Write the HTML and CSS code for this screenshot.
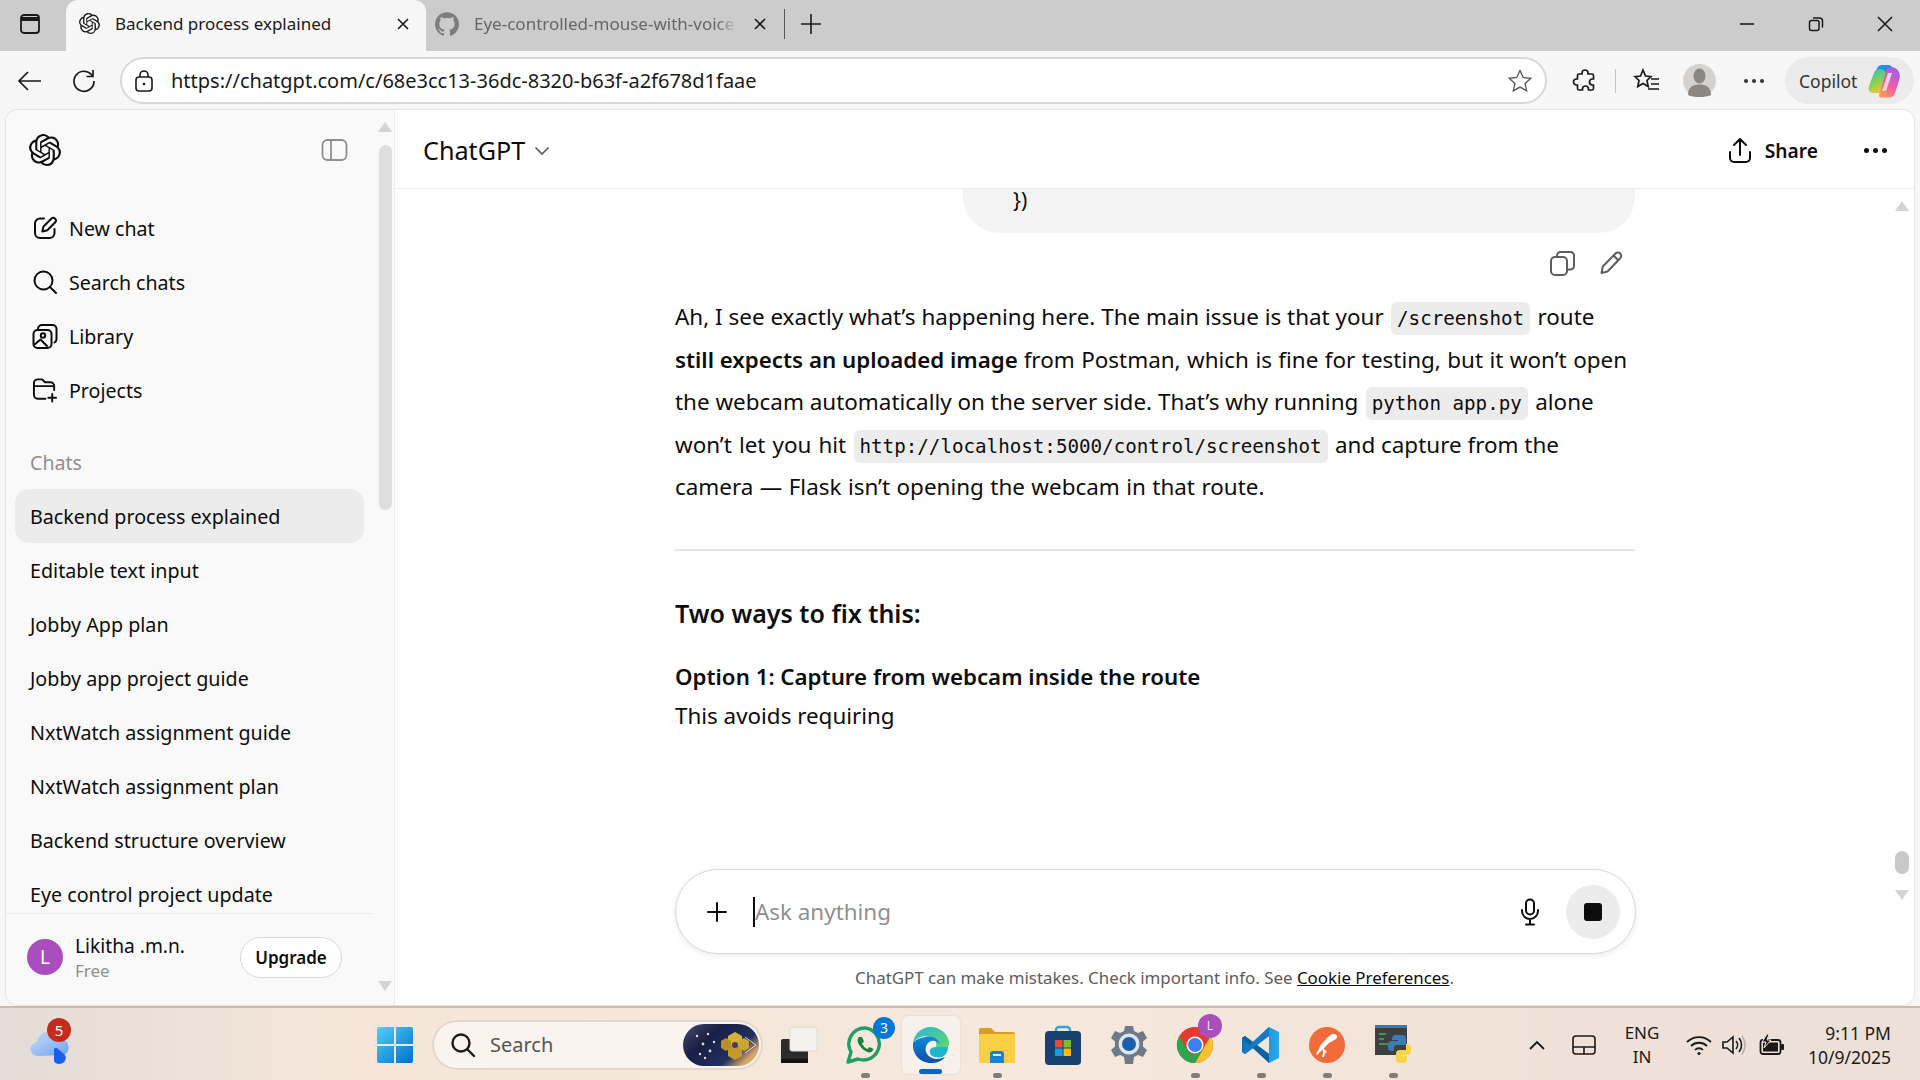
FILE: index.html
```html
<!DOCTYPE html>
<html lang="en">
<head>
<meta charset="utf-8">
<title>Backend process explained</title>
<link rel="stylesheet" href="styles.css">
</head>
<body>
<svg class="defs" width="0" height="0" aria-hidden="true">
  <defs>
    <symbol id="oai" viewBox="0 0 24 24"><path fill="currentColor" d="M22.2819 9.8211a5.9847 5.9847 0 0 0-.5157-4.9108 6.0462 6.0462 0 0 0-6.5098-2.9A6.0651 6.0651 0 0 0 4.9807 4.1818a5.9847 5.9847 0 0 0-3.9977 2.9 6.0462 6.0462 0 0 0 .7427 7.0966 5.98 5.98 0 0 0 .511 4.9107 6.051 6.051 0 0 0 6.5146 2.9001A5.9847 5.9847 0 0 0 13.2599 24a6.0557 6.0557 0 0 0 5.7718-4.2058 5.9894 5.9894 0 0 0 3.9977-2.9001 6.0557 6.0557 0 0 0-.7475-7.0729zm-9.022 12.6081a4.4755 4.4755 0 0 1-2.8764-1.0408l.1419-.0804 4.7783-2.7582a.7948.7948 0 0 0 .3927-.6813v-6.7369l2.02 1.1686a.071.071 0 0 1 .038.052v5.5826a4.504 4.504 0 0 1-4.4945 4.4944zm-9.6607-4.1254a4.4708 4.4708 0 0 1-.5346-3.0137l.142.0852 4.783 2.7582a.7712.7712 0 0 0 .7806 0l5.8428-3.3685v2.3324a.0804.0804 0 0 1-.0332.0615L9.74 19.9502a4.4992 4.4992 0 0 1-6.1408-1.6464zM2.3408 7.8956a4.485 4.485 0 0 1 2.3655-1.9728V11.6a.7664.7664 0 0 0 .3879.6765l5.8144 3.3543-2.0201 1.1685a.0757.0757 0 0 1-.071 0l-4.8303-2.7865A4.504 4.504 0 0 1 2.3408 7.872zm16.5963 3.8558L13.1038 8.364 15.1192 7.2a.0757.0757 0 0 1 .071 0l4.8303 2.7913a4.4944 4.4944 0 0 1-.6765 8.1042v-5.6772a.79.79 0 0 0-.407-.667zm2.0107-3.0231l-.142-.0852-4.7735-2.7818a.7759.7759 0 0 0-.7854 0L9.409 9.2297V6.8974a.0662.0662 0 0 1 .0284-.0615l4.8303-2.7866a4.4992 4.4992 0 0 1 6.6802 4.66zM8.3065 12.863l-2.02-1.1638a.0804.0804 0 0 1-.038-.0567V6.0742a4.4992 4.4992 0 0 1 7.3757-3.4537l-.142.0805L8.704 5.459a.7948.7948 0 0 0-.3927.6813zm1.0976-2.3654l2.602-1.4998 2.6069 1.4998v2.9994l-2.5974 1.4997-2.6067-1.4997Z"/></symbol>
    <linearGradient id="cpA" x1="0" y1="0" x2="1" y2="1"><stop offset="0" stop-color="#22a6ee"/><stop offset="1" stop-color="#3757e0"/></linearGradient>
    <linearGradient id="cpB" x1="0.3" y1="0" x2="0.7" y2="1"><stop offset="0" stop-color="#2fc9b0"/><stop offset="0.55" stop-color="#8fd14f"/><stop offset="1" stop-color="#fbc52c"/></linearGradient>
    <linearGradient id="cpC" x1="0.8" y1="0" x2="0.3" y2="1"><stop offset="0" stop-color="#9a5cf2"/><stop offset="0.6" stop-color="#ee5fa5"/><stop offset="1" stop-color="#f9965a"/></linearGradient>
    <linearGradient id="winG" x1="0" y1="0" x2="1" y2="1"><stop offset="0" stop-color="#4fd0fb"/><stop offset="1" stop-color="#0070c8"/></linearGradient>
    <linearGradient id="edgeA" x1="0" y1="0" x2="1" y2="1"><stop offset="0" stop-color="#2fb7d8"/><stop offset="1" stop-color="#5fd66a"/></linearGradient>
    <linearGradient id="edgeB" x1="0" y1="0" x2="0" y2="1"><stop offset="0" stop-color="#0c8ad8"/><stop offset="1" stop-color="#0c4fa8"/></linearGradient>
    <linearGradient id="cloudG" x1="0" y1="0" x2="1" y2="1"><stop offset="0" stop-color="#c7dcfa"/><stop offset="1" stop-color="#6fa3ef"/></linearGradient>
    <linearGradient id="spaceG" x1="0" y1="0" x2="1" y2="0.6"><stop offset="0" stop-color="#4a4a68"/><stop offset="0.4" stop-color="#161f45"/><stop offset="0.8" stop-color="#23305f"/><stop offset="1" stop-color="#d8a668"/></linearGradient>
    <linearGradient id="vsG" x1="0" y1="0" x2="1" y2="0"><stop offset="0" stop-color="#0f6fb8"/><stop offset="1" stop-color="#27a9f0"/></linearGradient>
  </defs>
</svg>

<header class="tabstrip">
  <span class="strip-btn">
    <svg width="22" height="22" viewBox="0 0 22 22" fill="none" stroke="#1a1a1a" stroke-width="1.8"><rect x="2" y="2" width="18" height="18" rx="3"/><path d="M2 6h18" stroke-width="4"/></svg>
  </span>
  <div class="tab tab-active">
    <svg class="tab-fav" width="21" height="21"><use href="#oai"/></svg>
    <span class="tab-title">Backend process explained</span>
    <svg class="tab-x" width="14" height="14" viewBox="0 0 14 14" stroke="#1a1a1a" stroke-width="1.6"><path d="M2 2l10 10M12 2L2 12"/></svg>
  </div>
  <div class="tab tab-other">
    <svg class="tab-fav" width="24" height="24" viewBox="0 0 24 24"><path fill="#7d7d7d" d="M12 .297c-6.63 0-12 5.373-12 12 0 5.303 3.438 9.8 8.205 11.385.6.113.82-.258.82-.577 0-.285-.01-1.04-.015-2.04-3.338.724-4.042-1.61-4.042-1.61C4.422 18.07 3.633 17.7 3.633 17.7c-1.087-.744.084-.729.084-.729 1.205.084 1.838 1.236 1.838 1.236 1.07 1.835 2.809 1.305 3.495.998.108-.776.417-1.305.76-1.605-2.665-.3-5.466-1.332-5.466-5.93 0-1.31.465-2.38 1.235-3.22-.135-.303-.54-1.523.105-3.176 0 0 1.005-.322 3.3 1.23.96-.267 1.98-.399 3-.405 1.02.006 2.04.138 3 .405 2.28-1.552 3.285-1.23 3.285-1.23.645 1.653.24 2.873.12 3.176.765.84 1.23 1.91 1.23 3.22 0 4.61-2.805 5.625-5.475 5.92.42.36.81 1.096.81 2.22 0 1.606-.015 2.896-.015 3.286 0 .315.21.69.825.57C20.565 22.092 24 17.592 24 12.297c0-6.627-5.373-12-12-12"/></svg>
    <span class="tab-title tab-title-dim">Eye-controlled-mouse-with-voice</span>
    <svg class="tab-x" width="14" height="14" viewBox="0 0 14 14" stroke="#1a1a1a" stroke-width="1.6"><path d="M2 2l10 10M12 2L2 12"/></svg>
  </div>
  <span class="tab-sep"></span>
  <svg class="tab-plus" width="22" height="22" viewBox="0 0 22 22" stroke="#1a1a1a" stroke-width="1.6"><path d="M11 1v20M1 11h20"/></svg>
  <div class="win-ctrls">
    <svg width="16" height="16" viewBox="0 0 16 16" stroke="#1a1a1a" stroke-width="1.6"><path d="M1 8h14"/></svg>
    <svg width="16" height="16" viewBox="0 0 16 16" fill="none" stroke="#1a1a1a" stroke-width="1.5"><rect x="1.5" y="4.5" width="9.5" height="10" rx="2"/><path d="M5 2h6.5a3 3 0 0 1 3 3v6.5"/></svg>
    <svg width="16" height="16" viewBox="0 0 16 16" stroke="#1a1a1a" stroke-width="1.6"><path d="M1 1l14 14M15 1L1 15"/></svg>
  </div>
</header>

<nav class="toolbar">
  <svg class="tb-back" width="26" height="24" viewBox="0 0 26 24" fill="none" stroke="#1a1a1a" stroke-width="1.7"><path d="M24 12H2M11 3l-9 9 9 9"/></svg>
  <svg class="tb-reload" width="26" height="26" viewBox="0 0 26 26" fill="none" stroke="#1a1a1a" stroke-width="1.7"><path d="M21.5 8A10 10 0 1 0 23 13"/><path d="M22 2v6.5h-6.5"/></svg>
  <div class="address">
    <svg width="20" height="24" viewBox="0 0 20 24" fill="none" stroke="#1a1a1a" stroke-width="1.6"><rect x="2" y="8" width="16" height="14" rx="3"/><path d="M6 8V6a4 4 0 0 1 8 0v2"/><circle cx="10" cy="15" r="1.3" fill="#1a1a1a" stroke="none"/></svg>
    <span class="url">https://chatgpt.com/c/68e3cc13-36dc-8320-b63f-a2f678d1faae</span>
    <svg class="addr-star" width="26" height="26" viewBox="0 0 26 26" fill="none" stroke="#555" stroke-width="1.3"><path d="M13 2.5l3.2 7 7.6.8-5.7 5.1 1.6 7.5L13 19.1l-6.7 3.8 1.6-7.5-5.7-5.1 7.6-.8z"/></svg>
  </div>
  <svg class="tb-ext" width="26" height="26" viewBox="0 0 26 26" fill="none" stroke="#1a1a1a" stroke-width="1.7"><path d="M10 5a3 3 0 0 1 6 0v1h4a1.5 1.5 0 0 1 1.5 1.5V11h-1a3 3 0 0 0 0 6h1v3.5A1.5 1.5 0 0 1 20 22h-3.5v-1a3 3 0 0 0-6 0v1H7a1.5 1.5 0 0 1-1.5-1.5V17h-1a3 3 0 0 1 0-6h1V7.5A1.5 1.5 0 0 1 7 6h3z"/></svg>
  <span class="tb-sep"></span>
  <svg class="tb-fav" width="28" height="26" viewBox="0 0 28 26" fill="none" stroke="#1a1a1a" stroke-width="1.7"><path d="M10 2l2.5 6 5.5.6-4 3.9 1.2 6-5.2-3-5.2 3 1.2-6-4-3.9 5.5-.6z"/><path d="M18 11h8M18 16h8M15 21h11"/></svg>
  <span class="profile"><svg width="33" height="33" viewBox="0 0 33 33"><circle cx="16.5" cy="16.5" r="16.5" fill="#d5d3cf"/><ellipse cx="16.5" cy="12" rx="6" ry="7.5" fill="#8b8782"/><path d="M5 31c0-8 5-10.5 11.5-10.5S28 23 28 31c-3 1.5-7 2-11.5 2S8 32.5 5 31z" fill="#8b8782"/></svg></span>
  <span class="tb-dots"><i></i><i></i><i></i></span>
  <div class="copilot">
    <span>Copilot</span>
    <svg width="34" height="34" viewBox="0 0 34 34"><path d="M21 1h-6c-3 0-4.5 1.5-5.5 4.5L4 22l11 2 6-18c.5-2 2-3 4-3-1-1.5-2.5-2-4-2z" fill="url(#cpA)"/><path d="M13 5c-3 0-5 1-6 4L2 22c-1.5 4 1 7 4.5 7H15c1 0 1.5-1 2-2l3-12C20 8 17 5 13 5z" fill="url(#cpB)"/><path d="M24 3c-3 0-4 2-5 4l-7 24c-.3 1.5.5 2.5 2 2.5h8c3 0 5-1.5 6-4.5l4.5-14C34 9 30 3 24 3z" fill="url(#cpC)"/><path d="M21 9h4l-6 18h-4z" fill="#fff" opacity=".7"/></svg>
  </div>
</nav>

<div class="window">
  <aside class="sidebar">
    <div class="side-scroll">
      <div class="side-top">
        <svg class="side-logo" width="32" height="32"><use href="#oai"/></svg>
        <svg width="27" height="24" viewBox="0 0 27 24" fill="none" stroke="#8e8e8e" stroke-width="1.8"><rect x="1.5" y="2" width="24" height="20" rx="5"/><path d="M10 2v20"/></svg>
      </div>
      <ul class="side-nav">
        <li><svg width="26" height="26" viewBox="0 0 26 26" fill="none" stroke="#0d0d0d" stroke-width="2" stroke-linecap="round" stroke-linejoin="round"><path d="M12 3.5H8a5 5 0 0 0-5 5V18a5 5 0 0 0 5 5h9.5a5 5 0 0 0 5-5v-4"/><path d="M19.5 3.5a2.7 2.7 0 0 1 3.8 3.8l-8 8-5 1.2 1.2-5z"/></svg>New chat</li>
        <li><svg width="26" height="26" viewBox="0 0 26 26" fill="none" stroke="#0d0d0d" stroke-width="2" stroke-linecap="round"><circle cx="11.5" cy="11.5" r="9"/><path d="M18.2 18.2L24 24"/></svg>Search chats</li>
        <li><svg width="26" height="26" viewBox="0 0 26 26" fill="none" stroke="#0d0d0d" stroke-width="2" stroke-linecap="round" stroke-linejoin="round"><rect x="1.5" y="7" width="18" height="18" rx="4"/><path d="M6 7V6a4 4 0 0 1 4-4h10.5a4 4 0 0 1 4 4v10a4 4 0 0 1-2 3.5"/><circle cx="11" cy="12.5" r="2.2"/><path d="M2 22l6.5-5.5L15 23"/></svg>Library</li>
        <li><svg width="26" height="26" viewBox="0 0 27 26" fill="none" stroke="#0d0d0d" stroke-width="2" stroke-linecap="round" stroke-linejoin="round"><path d="M14 22H6a4 4 0 0 1-4-4V6a4 4 0 0 1 4-4h4.5l3 3H19a4 4 0 0 1 4 4v4M2 9h21"/><path d="M21 17v8M17 21h8"/></svg>Projects</li>
      </ul>
      <div class="side-label">Chats</div>
      <ul class="chat-list">
        <li class="chat-active">Backend process explained</li>
        <li>Editable text input</li>
        <li>Jobby App plan</li>
        <li>Jobby app project guide</li>
        <li>NxtWatch assignment guide</li>
        <li>NxtWatch assignment plan</li>
        <li>Backend structure overview</li>
        <li>Eye control project update</li>
      </ul>
      <div class="side-user">
        <span class="avatar">L</span>
        <div class="user-text"><div class="user-name">Likitha .m.n.</div><div class="user-plan">Free</div></div>
        <span class="upgrade">Upgrade</span>
      </div>
    </div>
    <div class="scrollbar side-bar">
      <span class="sb-up"></span>
      <span class="side-thumb"></span>
      <span class="sb-down"></span>
    </div>
  </aside>

  <main class="main">
    <div class="main-head">
      <span class="model">ChatGPT</span>
      <svg class="model-caret" width="16" height="10" viewBox="0 0 16 10" fill="none" stroke="#5d5d5d" stroke-width="1.7"><path d="M1.5 1.5L8 8l6.5-6.5"/></svg>
      <span class="head-gap"></span>
      <svg width="24" height="27" viewBox="0 0 24 27" fill="none" stroke="#0d0d0d" stroke-width="2" stroke-linecap="round" stroke-linejoin="round"><path d="M12 18V2M6 8l6-6 6 6M2 15v6a4 4 0 0 0 4 4h12a4 4 0 0 0 4-4v-6"/></svg>
      <span class="share">Share</span>
      <span class="head-dots"><i></i><i></i><i></i></span>
    </div>
    <div class="main-body">
      <div class="thread">
        <div class="column">
          <div class="bubble"><span class="bubble-code">})</span></div>
          <div class="msg-actions">
            <svg width="27" height="27" viewBox="0 0 27 27" fill="none" stroke="#5d5d5d" stroke-width="2" stroke-linejoin="round"><rect x="2" y="7" width="16" height="18" rx="4"/><path d="M8 7V5.5A3.5 3.5 0 0 1 11.5 2h10A3.5 3.5 0 0 1 25 5.5V16a3.5 3.5 0 0 1-3.5 3.5H18"/></svg>
            <svg width="26" height="26" viewBox="0 0 26 26" fill="none" stroke="#5d5d5d" stroke-width="2" stroke-linejoin="round"><path d="M3.5 23l1.3-6.5L17.5 3.5a2.9 2.9 0 0 1 4.7 4.7L9.5 21.5z"/><path d="M15.5 5.500l4.800 4.800"/></svg>
          </div>
          <p class="para">Ah, I see exactly what’s happening here. The main issue is that your <code>/screenshot</code> route<br><strong>still expects an uploaded image</strong> <span class="para-wide">from Postman, which is fine for testing, but it won’t open</span><br>the webcam automatically on the server side. That’s why running <code>python app.py</code> alone<br><span class="para-wider">won’t let you hit</span> <code>http://localhost:5000/control/screenshot</code> and capture from the<br><span class="para-wide">camera — Flask isn’t opening the webcam in that route.</span></p>
          <hr class="rule">
          <h3 class="h-ways">Two ways to fix this:</h3>
          <p class="opt"><strong>Option 1: Capture from webcam inside the route</strong><br>This avoids requiring</p>
        </div>
      </div>
      <div class="scrollbar main-bar">
        <span class="sb-up"></span>
        <span class="main-thumb"></span>
        <span class="sb-down"></span>
      </div>
    </div>
    <div class="composer-wrap">
      <div class="composer">
        <svg class="comp-plus" width="22" height="22" viewBox="0 0 22 22" stroke="#0d0d0d" stroke-width="2" stroke-linecap="round"><path d="M11 2v18M2 11h18"/></svg>
        <span class="caret"></span>
        <span class="placeholder">Ask anything</span>
        <svg class="comp-mic" width="20" height="28" viewBox="0 0 20 28" fill="none" stroke="#0d0d0d" stroke-width="2" stroke-linecap="round"><rect x="6" y="1.5" width="8" height="15" rx="4"/><path d="M2 12v1a8 8 0 0 0 16 0v-1M10 21v5M6 26.5h8"/></svg>
        <span class="stop"><i></i></span>
      </div>
    </div>
    <div class="disclaimer">ChatGPT can make mistakes. Check important info. See <u>Cookie Preferences</u>.</div>
  </main>
</div>

<footer class="taskbar">
  <div class="widget">
    <svg width="40" height="42" viewBox="0 0 40 42"><path d="M9 32a7 7 0 0 1-1-14 12 12 0 0 1 23-3 8.5 8.5 0 0 1 4 16z" fill="url(#cloudG)"/><path d="M25 26c0-2 2-2.5 3.5-1.5l7 6c2 2 1.5 5 0 7s-5 3-8 2c-2-1-2.5-2-2.5-4z" fill="#1a5ef0"/></svg>
    <span class="widget-badge">5</span>
  </div>
  <div class="tb-icon tb-win">
    <svg width="36" height="36" viewBox="0 0 36 36"><path d="M2 0h15v17H0V2a2 2 0 0 1 2-2zM19 0h15a2 2 0 0 1 2 2v15H19zM0 19h17v17H2a2 2 0 0 1-2-2zM19 19h17v15a2 2 0 0 1-2 2H19z" fill="url(#winG)"/></svg>
  </div>
  <div class="search-box">
    <svg width="26" height="26" viewBox="0 0 26 26" fill="none" stroke="#1a1a1a" stroke-width="2.4" stroke-linecap="round"><circle cx="11" cy="11" r="8.5"/><path d="M17.5 17.5L24 24"/></svg>
    <span class="search-label">Search</span>
    <svg class="search-art" width="76" height="42" viewBox="0 0 76 42"><rect width="76" height="42" rx="21" fill="url(#spaceG)"/><g fill="#e6dcc0"><circle cx="14" cy="12" r="1.2"/><circle cx="20" cy="20" r="1.4"/><circle cx="25" cy="10" r="1.2"/><circle cx="27" cy="27" r="1.4"/><circle cx="17" cy="30" r="1.2"/><circle cx="31" cy="18" r="1.2"/><circle cx="22" cy="34" r="1.2"/></g><g fill="#d9b13a"><path d="M52 8l7 4v8l-7 4-7-4v-8z"/><path d="M52 20l7 4v8l-7 4-7-4v-8z" fill="#c49a2e"/><path d="M61 14l5 3v7l-5 3-5-3v-7z" fill="#c9a535"/><path d="M43 14l5 3v7l-5 3-5-3v-7z" fill="#b98f2b"/></g><circle cx="52" cy="21" r="3" fill="#4a3a66"/><path d="M62 13l11 8-11 8" fill="none" stroke="#cfd3e6" stroke-width="1"/></svg>
  </div>
  <div class="tb-icon">
    <svg width="38" height="38" viewBox="0 0 38 38"><rect x="1" y="13" width="27" height="24" rx="2" fill="#2b2b2b"/><rect x="1" y="33" width="27" height="4" fill="#111"/><rect x="10" y="1" width="27" height="24" rx="2" fill="#f4f1ee" stroke="#e0dbd6"/></svg>
  </div>
  <div class="tb-icon tb-run">
    <svg width="38" height="40" viewBox="0 0 38 40"><path d="M19 3a16 16 0 0 0-14 24L2 37l10-3a16 16 0 1 0 7-31z" fill="none" stroke="#1f9f62" stroke-width="3.4" stroke-linejoin="round"/><path d="M13 12c-2 2-2 5 1 9s6 6 9 6.5c2 .2 4-1.5 4.5-3.5l-4-2-2 2c-2-.7-4.5-3-5.5-5.5l2-2-2-4.5z" fill="#14833f"/></svg>
    <span class="app-badge">3</span>
    <i class="dot"></i>
  </div>
  <div class="tb-icon tb-active">
    <svg width="38" height="38" viewBox="0 0 38 38"><path d="M19 1C9 1 2 8 1 17c4-6 11-8 17-6 6 2 7 7 6 10h12c1-2 1-4 1-5C36 8 28 1 19 1z" fill="url(#edgeA)"/><path d="M1 17C0 28 8 37 19 37c6 0 11-2 14-6-6 3-14 3-18-3-3-5-1-11 4-13 3-1 7 0 9 3-2-6-9-9-15-7C8 12 3 14 1 17z" fill="url(#edgeB)"/><path d="M36 21H24c-3 0-5 1-6 3-1 3 1 6 5 7 4 1 8 0 10-2 2-2 3-5 3-8z" fill="#1fb6c9"/></svg>
    <i class="active-bar"></i>
  </div>
  <div class="tb-icon tb-run">
    <svg width="38" height="36" viewBox="0 0 38 36"><path d="M1 3a2 2 0 0 1 2-2h10l4 4h18a2 2 0 0 1 2 2v5H1z" fill="#d99e1f"/><rect x="1" y="7" width="36" height="29" rx="1" fill="#fbcf44"/><path d="M12 36v-9a3 3 0 0 1 3-3h8a3 3 0 0 1 3 3v9z" fill="#1383d6"/><rect x="15" y="27" width="8" height="2" fill="#d6ecfb"/></svg>
    <i class="dot"></i>
  </div>
  <div class="tb-icon">
    <svg width="36" height="40" viewBox="0 0 36 40"><path d="M11 7V5a3 3 0 0 1 3-3h8a3 3 0 0 1 3 3v2" fill="none" stroke="#2fa3dc" stroke-width="2.4"/><rect x="0" y="6" width="36" height="34" rx="4" fill="#17406f"/><rect x="10" y="15" width="7.5" height="7.5" fill="#ea4c2c"/><rect x="18.5" y="15" width="7.5" height="7.5" fill="#7dbb2b"/><rect x="10" y="23.5" width="7.5" height="7.5" fill="#1a9ce0"/><rect x="18.5" y="23.5" width="7.5" height="7.5" fill="#fdb813"/></svg>
  </div>
  <div class="tb-icon">
    <svg width="38" height="40" viewBox="0 0 38 40"><path d="M15 1h8l1 5 4 2 5-2 4 7-4 3.5v5L37 25l-4 7-5-2-4 2-1 7h-8l-1-7-4-2-5 2-4-7 4-3.5v-5L1 13l4-7 5 2 4-2z" fill="#6e7a87"/><circle cx="19" cy="19" r="10.5" fill="#dfe6ef"/><circle cx="19" cy="19" r="7" fill="#1c5fa8"/></svg>
  </div>
  <div class="tb-icon tb-run">
    <svg width="38" height="38" viewBox="0 0 38 38"><circle cx="19" cy="19" r="18" fill="#e33b2e"/><path d="M34.6 10A18 18 0 0 1 19 37l7.8-13.5z" fill="#fbc02d"/><path d="M3.4 10A18 18 0 0 0 19 37l7.8-13.5L19 28a9 9 0 0 1-7.8-4.5z" fill="#2fa44f"/><circle cx="19" cy="19" r="8.5" fill="#fff"/><circle cx="19" cy="19" r="7" fill="#3b7ff0"/></svg>
    <span class="chrome-badge">L</span>
    <i class="dot"></i>
  </div>
  <div class="tb-icon tb-run">
    <svg width="38" height="38" viewBox="0 0 38 38"><path d="M27 1l10 5v26l-10 5L11 22 3 28l-3-2v-14l3-2 8 6z" fill="url(#vsG)"/><path d="M27 10L15 19l12 9z" fill="#f1e6dc"/><path d="M0 12l3-2 24 18v9z" fill="#0d62a6"/><path d="M0 26l3 2L27 10V1z" fill="#1778c4"/></svg>
    <i class="dot"></i>
  </div>
  <div class="tb-icon tb-run">
    <svg width="36" height="36" viewBox="0 0 36 36"><circle cx="18" cy="18" r="18" fill="#f26b3a"/><path d="M25 7c3 0 4 3 2 5l-7 4-9 9-3 3-1-1 3-5 1-3 7-8c2-2 4-4 7-4z" fill="#fff"/><path d="M13 20l5 5-2 1-1 4h-2l1-5z" fill="#fff"/></svg>
    <i class="dot"></i>
  </div>
  <div class="tb-icon tb-run">
    <svg width="36" height="40" viewBox="0 0 36 40"><rect x="0" y="0" width="32" height="30" fill="#3c4043"/><rect x="0" y="0" width="32" height="3" fill="#2d7fc4"/><path d="M4 9h7M4 14h5M4 19h9" stroke="#4caf50" stroke-width="1.6"/><path d="M22 10h5a4 4 0 0 1 4 4v6h-9a3 3 0 0 0-3 3v3h-2a4 4 0 0 1-4-4v-2a4 4 0 0 1 4-4h6v-1h-6v-1a4 4 0 0 1 5-4z" fill="#3b7cb5"/><path d="M31 19h1a4 4 0 0 1 4 4v3a4 4 0 0 1-4 4h-6v1h6v3a4 4 0 0 1-4 4h-3a4 4 0 0 1-4-4v-5a4 4 0 0 1 4-4h6z" fill="#f7d54a"/></svg>
    <i class="dot"></i>
  </div>
  <div class="tray">
    <svg class="tr-chev" width="16" height="10" viewBox="0 0 16 10" fill="none" stroke="#1a1a1a" stroke-width="1.8"><path d="M1 9l7-7 7 7"/></svg>
    <svg class="tr-touch" width="24" height="20" viewBox="0 0 24 20" fill="none" stroke="#1a1a1a" stroke-width="1.6"><rect x="1" y="1" width="22" height="18" rx="3"/><path d="M1 12h22M12 12v7"/></svg>
    <div class="tr-lang">ENG<br>IN</div>
    <svg class="tr-wifi" width="26" height="22" viewBox="0 0 26 22" fill="none" stroke="#1a1a1a" stroke-width="1.8"><path d="M1 8a17 17 0 0 1 24 0M5 12a11.5 11.5 0 0 1 16 0M9 16a5.5 5.5 0 0 1 8 0"/><circle cx="13" cy="19.5" r="1.6" fill="#1a1a1a" stroke="none"/></svg>
    <svg class="tr-vol" width="24" height="22" viewBox="0 0 24 22" fill="none" stroke="#1a1a1a" stroke-width="1.6"><path d="M1 8v6h4l6 5V3L5 8z"/><path d="M14 7a6 6 0 0 1 0 8M17 4a11 11 0 0 1 0 14"/><path d="M20 2a15 15 0 0 1 0 18" stroke="#b5b0aa"/></svg>
    <svg class="tr-batt" width="26" height="24" viewBox="0 0 26 24"><rect x="1.5" y="7" width="20" height="14" rx="2.5" fill="none" stroke="#1a1a1a" stroke-width="1.8"/><rect x="4" y="9.5" width="15" height="9" fill="#1a1a1a"/><rect x="22" y="11" width="3" height="6" rx="1" fill="#1a1a1a"/><path d="M8 1L3 9h4l-2 6 7-8H8l2-6z" fill="#1a1a1a" stroke="#f3e4d8" stroke-width="1"/></svg>
    <div class="tr-clock"><div>9:11 PM</div><div>10/9/2025</div></div>
  </div>
</footer>
</body>
</html>
```

FILE: styles.css
```css
* { box-sizing: border-box; }
html, body { margin: 0; height: 100%; }
body {
  width: 1920px; height: 1080px; overflow: hidden;
  display: flex; flex-direction: column;
  font-family: "Noto Sans", "Open Sans", sans-serif;
  color: #0d0d0d; background: #f7f7f7;
}
.defs { position: absolute; }
ul { list-style: none; margin: 0; padding: 0; }

/* tab strip */
.tabstrip { height: 51px; flex: none; background: #cccccc; display: flex; align-items: center; padding-left: 19px; }
.strip-btn { width: 47px; display: flex; padding-bottom: 3px; }
.tab { height: 51px; display: flex; align-items: center; flex: none; }
.tab-active { width: 360px; background: #f7f7f7; border-radius: 12px 12px 0 0; padding: 0 16px 4px 13px; color: #1a1a1a; }
.tab-other { width: 346px; padding: 0 5px 4px 9px; }
.tab-fav { flex: none; color: #1a1a1a; }
.tab-title { flex: 1; margin-left: 15px; font-size: 17px; white-space: nowrap; overflow: hidden; }
.tab-title-dim { margin-left: 15px; color: #666; flex: none; width: 264px; margin-right: 15px; -webkit-mask-image: linear-gradient(90deg, #000 92%, transparent); mask-image: linear-gradient(90deg, #000 92%, transparent); }
.tab-sep { width: 1px; height: 30px; background: #555; margin-left: 12px; margin-bottom: 3px; }
.tab-plus { margin-left: 15px; margin-bottom: 3px; }
.win-ctrls { margin-left: auto; display: flex; gap: 53px; padding-right: 27px; padding-bottom: 3px; align-items: center; }

/* toolbar */
.toolbar { height: 59px; flex: none; background: #f7f7f7; display: flex; align-items: center; padding-left: 17px; }
.tb-back { flex: none; }
.tb-reload { flex: none; margin-left: 28px; }
.address { width: 1427px; height: 47px; margin-left: 23px; background: #fff; border: 2px solid #d8d8d8; border-radius: 24px; display: flex; align-items: center; padding: 0 12px 0 12px; flex: none; }
.url { margin-left: 17px; font-size: 20px; color: #1a1a1a; white-space: nowrap; }
.addr-star { margin-left: auto; }
.tb-ext { margin-left: 25px; flex: none; }
.tb-sep { width: 1px; height: 24px; background: #c4c4c4; margin-left: 17px; flex: none; }
.tb-fav { margin-left: 17px; flex: none; }
.profile { margin-left: 22px; display: flex; flex: none; }
.tb-dots { margin-left: 28px; display: flex; gap: 4px; flex: none; }
.tb-dots i, .head-dots i { display: block; width: 4px; height: 4px; border-radius: 50%; background: #333; }
.copilot { margin-left: 21px; width: 129px; height: 47px; flex: none; background: #ebebeb; border-radius: 24px; display: flex; align-items: center; padding: 0 13px 0 14px; font-size: 17.5px; color: #333; justify-content: space-between; }

/* window */
.window { height: 895px; flex: none; margin: 0 6px 0 6px; display: flex; border-radius: 12px; overflow: hidden; background: #fff; box-shadow: 0 0 2px rgba(0,0,0,.25); }
.sidebar { width: 389px; flex: none; background: #f9f9f9; border-right: 1px solid #ececec; display: flex; position: relative; }
.side-scroll { width: 367px; flex: none; display: flex; flex-direction: column; }
.side-top { height: 80px; flex: none; display: flex; align-items: center; justify-content: space-between; padding: 0 25px 0 23px; }
.side-nav { margin-top: 11px; }
.side-nav li { height: 54px; display: flex; align-items: center; gap: 11px; padding-left: 26px; font-size: 19.6px; color: #0d0d0d; }
.side-label { height: 54px; margin-top: 18px; display: flex; align-items: center; padding-left: 24px; font-size: 19.6px; color: #8f8f8f; }
.chat-list { flex: 1; min-height: 0; overflow: hidden; padding-left: 9px; }
.chat-list li { height: 54px; width: 349px; display: flex; align-items: center; padding-left: 15px; font-size: 19.7px; color: #0d0d0d; border-radius: 14px; white-space: nowrap; }
.chat-active { background: #ececec; }
.side-user { height: 92px; flex: none; border-top: 1px solid #ececec; display: flex; align-items: center; padding: 0 31px 6px 21px; }
.avatar { width: 36px; height: 36px; border-radius: 50%; background: #ab4ebd; color: #fff; display: flex; align-items: center; justify-content: center; font-size: 19px; flex: none; }
.user-text { margin-left: 12px; flex: 1; }
.user-name { font-size: 19.2px; line-height: 28px; color: #0d0d0d; }
.user-plan { font-size: 17px; line-height: 22px; color: #8f8f8f; }
.upgrade { width: 102px; height: 41px; margin-top: 2px; border: 1px solid #d9d9d9; background: #fff; border-radius: 21px; display: flex; align-items: center; justify-content: center; font-size: 17px; font-weight: 600; }

.scrollbar { display: flex; flex-direction: column; align-items: center; }
.side-bar { width: 14px; margin-left: 5px; padding-top: 12px; padding-bottom: 14px; }
.sb-up { width: 0; height: 0; border-left: 7px solid transparent; border-right: 7px solid transparent; border-bottom: 10px solid #d4d4d4; flex: none; }
.sb-down { width: 0; height: 0; border-left: 7px solid transparent; border-right: 7px solid transparent; border-top: 10px solid #d4d4d4; margin-top: auto; flex: none; }
.side-thumb { width: 13px; height: 365px; margin-top: 13px; background: #dedede; border-radius: 7px; flex: none; }

/* main */
.main { flex: 1; min-width: 0; display: flex; flex-direction: column; background: #fff; }
.main-head { height: 79px; flex: none; display: flex; align-items: center; padding: 2px 27px 0 28px; border-bottom: 1px solid #ececec; position: relative; z-index: 1; background: #fff; }
.model { font-size: 25.2px; color: #0d0d0d; }
.model-caret { margin-left: 9px; margin-top: 2px; }
.head-gap { flex: 1; }
.share { font-size: 19.2px; font-weight: 600; margin-left: 13px; }
.head-dots { margin-left: 46px; display: flex; gap: 4px; }
.head-dots i { width: 5px; height: 5px; background: #0d0d0d; }
.main-body { flex: 1; min-height: 0; display: flex; }
.thread { flex: 1; min-width: 0; padding-left: 280px; }
.column { width: 960px; }
.bubble { margin-left: 288px; height: 44px; background: #f4f4f4; border-radius: 0 0 36px 36px; padding-left: 50px; font-size: 21px; line-height: 22px; }
.bubble-code { display: block; color: #0d0d0d; }
.msg-actions { height: 60px; display: flex; align-items: center; justify-content: flex-end; gap: 22px; padding-right: 11px; }
.para { margin: 3px 0 0; font-size: 22.45px; line-height: 42.55px; color: #0d0d0d; white-space: nowrap; }
.para-wide { word-spacing: 0.6px; }
.para-wider { word-spacing: 1.2px; }
code { font-family: "DejaVu Sans Mono", monospace; font-size: 19.2px; line-height: 1; background: #ececec; border-radius: 6px; padding: 5px 6px; margin: 0 1.5px; }
strong { font-weight: 600; font-size: 22.3px; }
.rule { border: 0; border-top: 2px solid #e5e5e5; margin: 40px 0 0; }
.h-ways { margin: 42px 0 0; font-size: 25px; line-height: 40px; font-weight: 600; }
.opt { margin: 24px 0 0; font-size: 22.4px; line-height: 39px; }
.main-bar { width: 16px; flex: none; margin-right: 4px; padding-top: 12px; padding-bottom: 0; }
.main-thumb { width: 14px; height: 23px; background: #c9c9c9; border-radius: 7px; margin-top: auto; flex: none; }
.main-bar .sb-down { margin-top: 16px; margin-bottom: 53px; }
.composer-wrap { flex: none; height: 0; position: relative; padding-left: 280px; }
.composer { position: absolute; left: 280px; top: -84px; width: 961px; height: 85px; background: #fff; border: 1px solid #d9d9d9; border-radius: 43px; box-shadow: 0 2px 6px rgba(0,0,0,.08); display: flex; align-items: center; padding: 0 15px 0 30px; }
.comp-plus { flex: none; }
.caret { width: 2px; height: 30px; background: #0d0d0d; margin-left: 25px; flex: none; }
.placeholder { margin-left: 0; font-size: 22.4px; color: #8f8f8f; flex: 1; }
.comp-mic { margin-right: 26px; }
.stop { width: 54px; height: 54px; background: #ececec; border-radius: 50%; display: flex; align-items: center; justify-content: center; flex: none; }
.stop i { display: block; width: 18px; height: 18px; background: #0d0d0d; border-radius: 3px; }
.disclaimer { height: 52px; flex: none; text-align: center; padding-top: 13px; font-size: 16.9px; line-height: 24px; color: #5d5d5d; white-space: nowrap; }
.disclaimer u { color: #0d0d0d; }

/* taskbar */
.taskbar { height: 75px; flex: none; margin-top: 1px; display: flex; align-items: center; background: linear-gradient(90deg, #e4dcd7 0%, #f5e6d9 18%, #f6e8dc 55%, #efe1d7 85%, #ece0d8 100%); border-top: 2px solid #c6bdb6; position: relative; }
.widget { width: 362px; height: 72px; flex: none; display: flex; align-items: center; padding-left: 29px; position: relative; }
.widget-badge { position: absolute; left: 47px; top: 9px; width: 24px; height: 24px; border-radius: 50%; background: #c42b1c; color: #fff; font-size: 15px; display: flex; align-items: center; justify-content: center; }
.tb-icon { width: 66px; height: 58px; flex: none; display: flex; align-items: center; justify-content: center; position: relative; }
.tb-win { width: 72px; padding-right: 6px; }
.search-box { width: 327px; height: 46px; flex: none; background: #faf4ef; border-radius: 23px; box-shadow: 0 0 0 2px #e4d8ce; display: flex; align-items: center; padding: 0 2px 0 16px; margin-right: 5px; }
.search-label { margin-left: 14px; font-size: 20px; color: #555; flex: 1; }
.search-art { flex: none; }
.dot { position: absolute; left: 29px; bottom: -4px; width: 9px; height: 5px; border-radius: 3px; background: #7d7d7d; }
.tb-active { background: #f8f1eb; width: 58px; margin: 0 4px; border-radius: 6px; box-shadow: 0 0 0 1px #ecdfd4; }
.active-bar { position: absolute; left: 17px; bottom: 0; width: 23px; height: 5px; border-radius: 3px; background: #0067c0; }
.app-badge { position: absolute; right: 3px; top: 1px; width: 22px; height: 22px; border-radius: 50%; background: #0078d4; color: #fff; font-size: 14px; display: flex; align-items: center; justify-content: center; }
.chrome-badge { position: absolute; right: 6px; top: -2px; width: 24px; height: 24px; border-radius: 50%; background: #ab4ebd; color: #eee; font-size: 12px; display: flex; align-items: center; justify-content: center; }
.tray { margin-left: auto; display: flex; align-items: center; padding-right: 29px; color: #1a1a1a; }
.tr-chev { margin-right: 27px; }
.tr-touch { margin-right: 16px; }
.tr-lang { width: 60px; margin-right: 14px; text-align: center; font-size: 17px; line-height: 24px; }
.tr-wifi { margin-right: 10px; }
.tr-vol { margin-right: 13px; }
.tr-batt { margin-right: 20px; }
.tr-clock { width: 86px; text-align: right; font-size: 17.5px; line-height: 24px; white-space: nowrap; }
```
